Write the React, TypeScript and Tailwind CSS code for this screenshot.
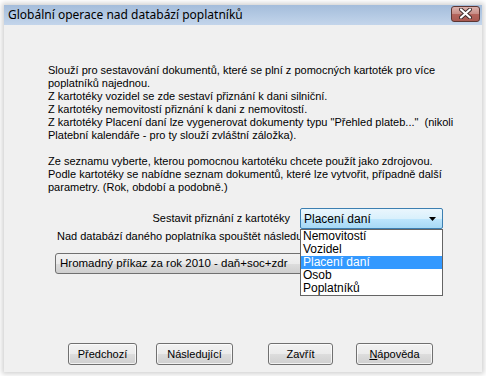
import React from 'react';

const bodyFont = { fontFamily: '"Liberation Sans", Arial, sans-serif' };

const Button: React.FC<{ w: string; children: React.ReactNode }> = ({ w, children }) => (
  <div
    className={`${w} h-[22px] flex items-center justify-center rounded-[3px] border border-[#707070] bg-[linear-gradient(to_bottom,#f2f2f2_0%,#ebebeb_50%,#dddddd_51%,#cfcfcf_100%)] text-[11px] text-black shadow-[inset_0_0_0_1px_rgba(255,255,255,0.7)]`}
  >
    {children}
  </div>
);

export default function App() {
  const items = ['Nemovitostí', 'Vozidel', 'Placení daní', 'Osob', 'Poplatníků'];

  return (
    <div className="w-[486px] h-[376px] bg-white pt-[5px] px-[4px] pb-[4px] overflow-hidden" style={bodyFont}>
      <div className="h-full flex flex-col shadow-[0_0_5px_2px_rgba(0,0,0,0.18)]">
        {/* Title bar */}
        <div className="h-[20px] flex items-center justify-between pl-[4px] pr-[2px] bg-[linear-gradient(to_bottom,#a4bddb,#c3d5eb)]">
          <span className="text-[12px] text-black" style={{ fontFamily: '"Noto Sans", "Open Sans", sans-serif' }}>
            Globální operace nad databází poplatníků
          </span>
          <div className="w-[29px] h-[16px] mt-[-3px] rounded-[3px] border border-[#5b3633] bg-[linear-gradient(to_bottom,#dcb3ae_0%,#c78c85_50%,#b4655d_51%,#a95a52_100%)] flex items-center justify-center">
            <svg width="13" height="11" viewBox="0 0 13 11">
              <path d="M2 1.5 L11 9.5 M11 1.5 L2 9.5" stroke="#3a2a2a" strokeWidth="4" strokeLinecap="round" />
              <path d="M2 1.5 L11 9.5 M11 1.5 L2 9.5" stroke="#ffffff" strokeWidth="2.2" strokeLinecap="round" />
            </svg>
          </div>
        </div>

        {/* Body */}
        <div className="flex-1 bg-[#f0f0f0] flex flex-col">
          <div className="pl-[44px] pt-[39px] text-[11px] leading-[13px] text-black whitespace-nowrap">
            <p>
              Slouží pro sestavování dokumentů, které se plní z pomocných kartoték pro více
              <br />
              poplatníků najednou.
              <br />
              Z kartotéky vozidel se zde sestaví přiznání k dani silniční.
              <br />
              Z kartotéky nemovitostí přiznání k dani z nemovitostí.
              <br />
              Z kartotéky Placení daní lze vygenerovat dokumenty typu "Přehled plateb..."&nbsp; (nikoli
              <br />
              Platební kalendáře - pro ty slouží zvláštní záložka).
            </p>
            <p className="mt-[13px]">
              Ze seznamu vyberte, kterou pomocnou kartotéku chcete použít jako zdrojovou.
              <br />
              Podle kartotéky se nabídne seznam dokumentů, které lze vytvořit, případně další
              <br />
              parametry. (Rok, období a podobně.)
            </p>
          </div>

          {/* Source combo row */}
          <div className="mt-[14px] flex items-center justify-end pr-[39px] text-[11px]">
            <span className="mr-[10px]">Sestavit přiznání z kartotéky</span>
            <div className="relative z-10 w-[143px] h-[21px]">
              <div className="h-full flex items-center justify-between pl-[3px] pr-[6px] text-[12px] rounded-[2px] border border-[#3c7fb1] bg-[linear-gradient(to_bottom,#eaf6fd_0%,#d9f0fc_50%,#bee6fd_51%,#a7d9f5_100%)]">
                <span>Placení daní</span>
                <svg width="7" height="4" viewBox="0 0 7 4">
                  <path d="M0 0 H7 L3.5 4 Z" fill="#000" />
                </svg>
              </div>
              <div className="absolute left-0 top-full w-full h-[67px] bg-white border border-[#646464] flex flex-col">
                {items.map((it) => (
                  <div
                    key={it}
                    className={`h-[13px] leading-[13px] pl-[2px] text-[12px] ${it === 'Placení daní' ? 'bg-[#3399ff] text-white' : 'text-black'}`}
                  >
                    {it}
                  </div>
                ))}
              </div>
            </div>
          </div>

          <div className="mt-[1px] ml-[53px] w-[243px] overflow-hidden text-[11px] leading-[13px] whitespace-nowrap">
            Nad databází daného poplatníka spouštět následující operaci
          </div>

          <div className="mt-[10px] ml-[51px] w-[388px] h-[21px] flex items-center pl-[4px] text-[11.5px] rounded-[3px] border border-[#707070] bg-[linear-gradient(to_bottom,#f2f2f2_0%,#ebebeb_50%,#dddddd_51%,#cfcfcf_100%)]">
            Hromadný příkaz za rok 2010 - daň+soc+zdr
          </div>

          {/* Buttons */}
          <div className="mt-[69px] flex pl-[64px]">
            <Button w="w-[69px]">Předchozí</Button>
            <div className="w-[19px]" />
            <Button w="w-[77px]">Následující</Button>
            <div className="w-[35px]" />
            <Button w="w-[65px]">Zavřít</Button>
            <div className="w-[23px]" />
            <Button w="w-[77px]">
              <span>
                <span className="underline">N</span>ápověda
              </span>
            </Button>
          </div>
        </div>
      </div>
    </div>
  );
}
